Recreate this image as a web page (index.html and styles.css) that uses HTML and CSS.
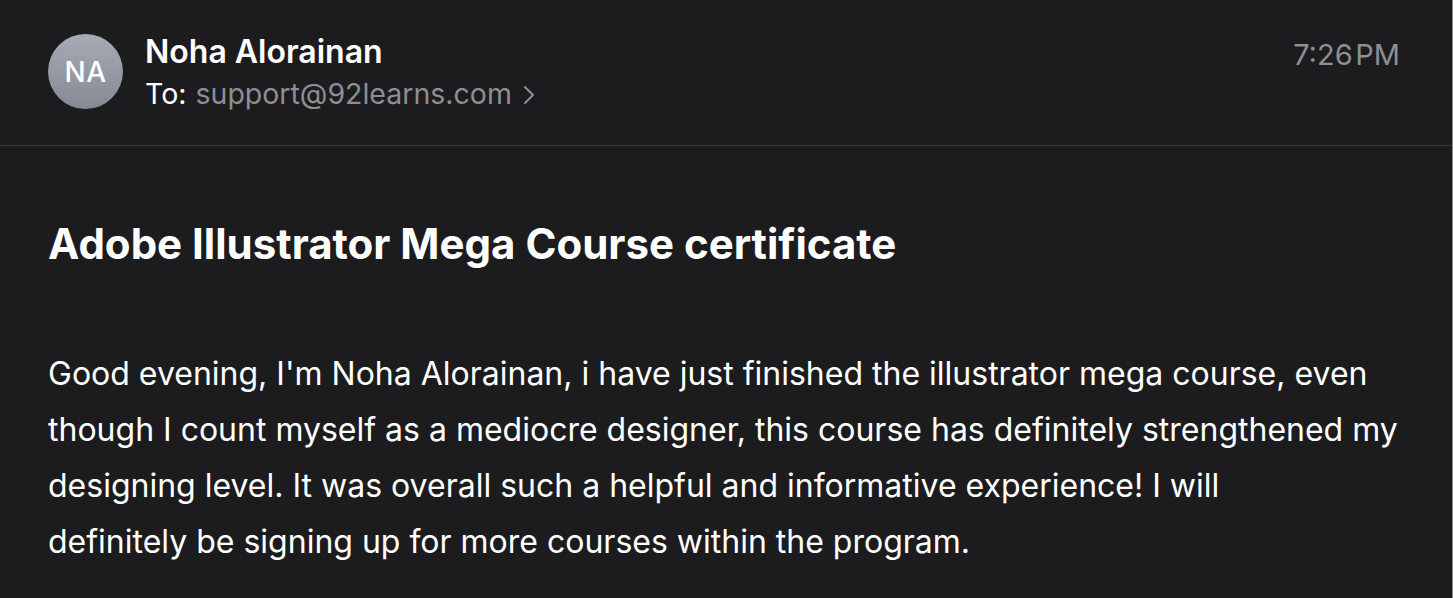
FILE: index.html
```html
<!DOCTYPE html>
<html lang="en">
<head>
<meta charset="utf-8">
<title>Adobe Illustrator Mega Course certificate</title>
<link rel="stylesheet" href="styles.css">
</head>
<body>
<div class="page">
  <header class="mail-header">
    <div class="avatar">NA</div>
    <div class="sender">
      <div class="sender-name">Noha Alorainan</div>
      <div class="recipient">
        <span class="to-label">To:</span>
        <span class="to-address">support@92learns.com</span>
        <svg class="chevron" width="14" height="20" viewBox="0 0 14 20" aria-hidden="true">
          <polyline points="3,2 11,10 3,18" fill="none" stroke="#8e8e93" stroke-width="2" stroke-linecap="round" stroke-linejoin="round"/>
        </svg>
      </div>
    </div>
    <div class="time">7:26&#8202;PM</div>
  </header>
  <main class="mail-body">
    <h1 class="subject">Adobe Illustrator Mega Course certificate</h1>
    <p class="message">Good evening, I'm Noha Alorainan, i have just finished the illustrator mega course, even<br>though I count myself as a mediocre designer, this course has definitely strengthened my<br>designing level. It was overall such a helpful and informative experience! I will<br>definitely be signing up for more courses within the program.</p>
  </main>
</div>
</body>
</html>
```

FILE: styles.css
```css
* { box-sizing: border-box; }
html, body {
  margin: 0;
  padding: 0;
  background: #1c1c1e;
}
body {
  font-family: Inter, "Noto Sans", "Liberation Sans", sans-serif;
  color: #ffffff;
}
.page {
  width: 1453px;
  height: 598px;
  overflow: hidden;
  border-right: 1px solid #8a8a8c;
  background: #1c1c1e;
}
.mail-header {
  display: flex;
  align-items: flex-start;
  padding: 34px 52px 34px 48px;
  border-bottom: 1px solid #3a3a3c;
}
.avatar {
  flex: none;
  width: 75px;
  height: 75px;
  border-radius: 50%;
  background: linear-gradient(180deg, #a7abb6 0%, #858994 100%);
  display: flex;
  align-items: center;
  justify-content: center;
  font-size: 28px;
  font-weight: 500;
  color: #ffffff;
  letter-spacing: 0.5px;
}
.sender {
  margin-left: 22px;
  margin-top: -1px;
  flex: 1;
}
.sender-name {
  font-size: 32px;
  line-height: 38px;
  font-weight: 600;
}
.recipient {
  margin-top: 6px;
  display: flex;
  align-items: center;
  font-size: 28.5px;
  line-height: 34px;
}
.to-label {
  color: #ffffff;
  margin-right: 9px;
}
.to-address {
  color: #8e8e93;
}
.chevron {
  margin-left: 10px;
  margin-top: 1px;
}
.time {
  margin-top: 4px;
  font-size: 29px;
  line-height: 34px;
  color: #8e8e93;
}
.mail-body {
  padding: 0 48px;
}
.subject {
  margin: 73px 0 0 0;
  font-size: 42px;
  line-height: 50px;
  font-weight: 700;
}
.message {
  margin: 77px 0 0 0;
  font-size: 32px;
  line-height: 56px;
  font-weight: 400;
  white-space: nowrap;
}
```
